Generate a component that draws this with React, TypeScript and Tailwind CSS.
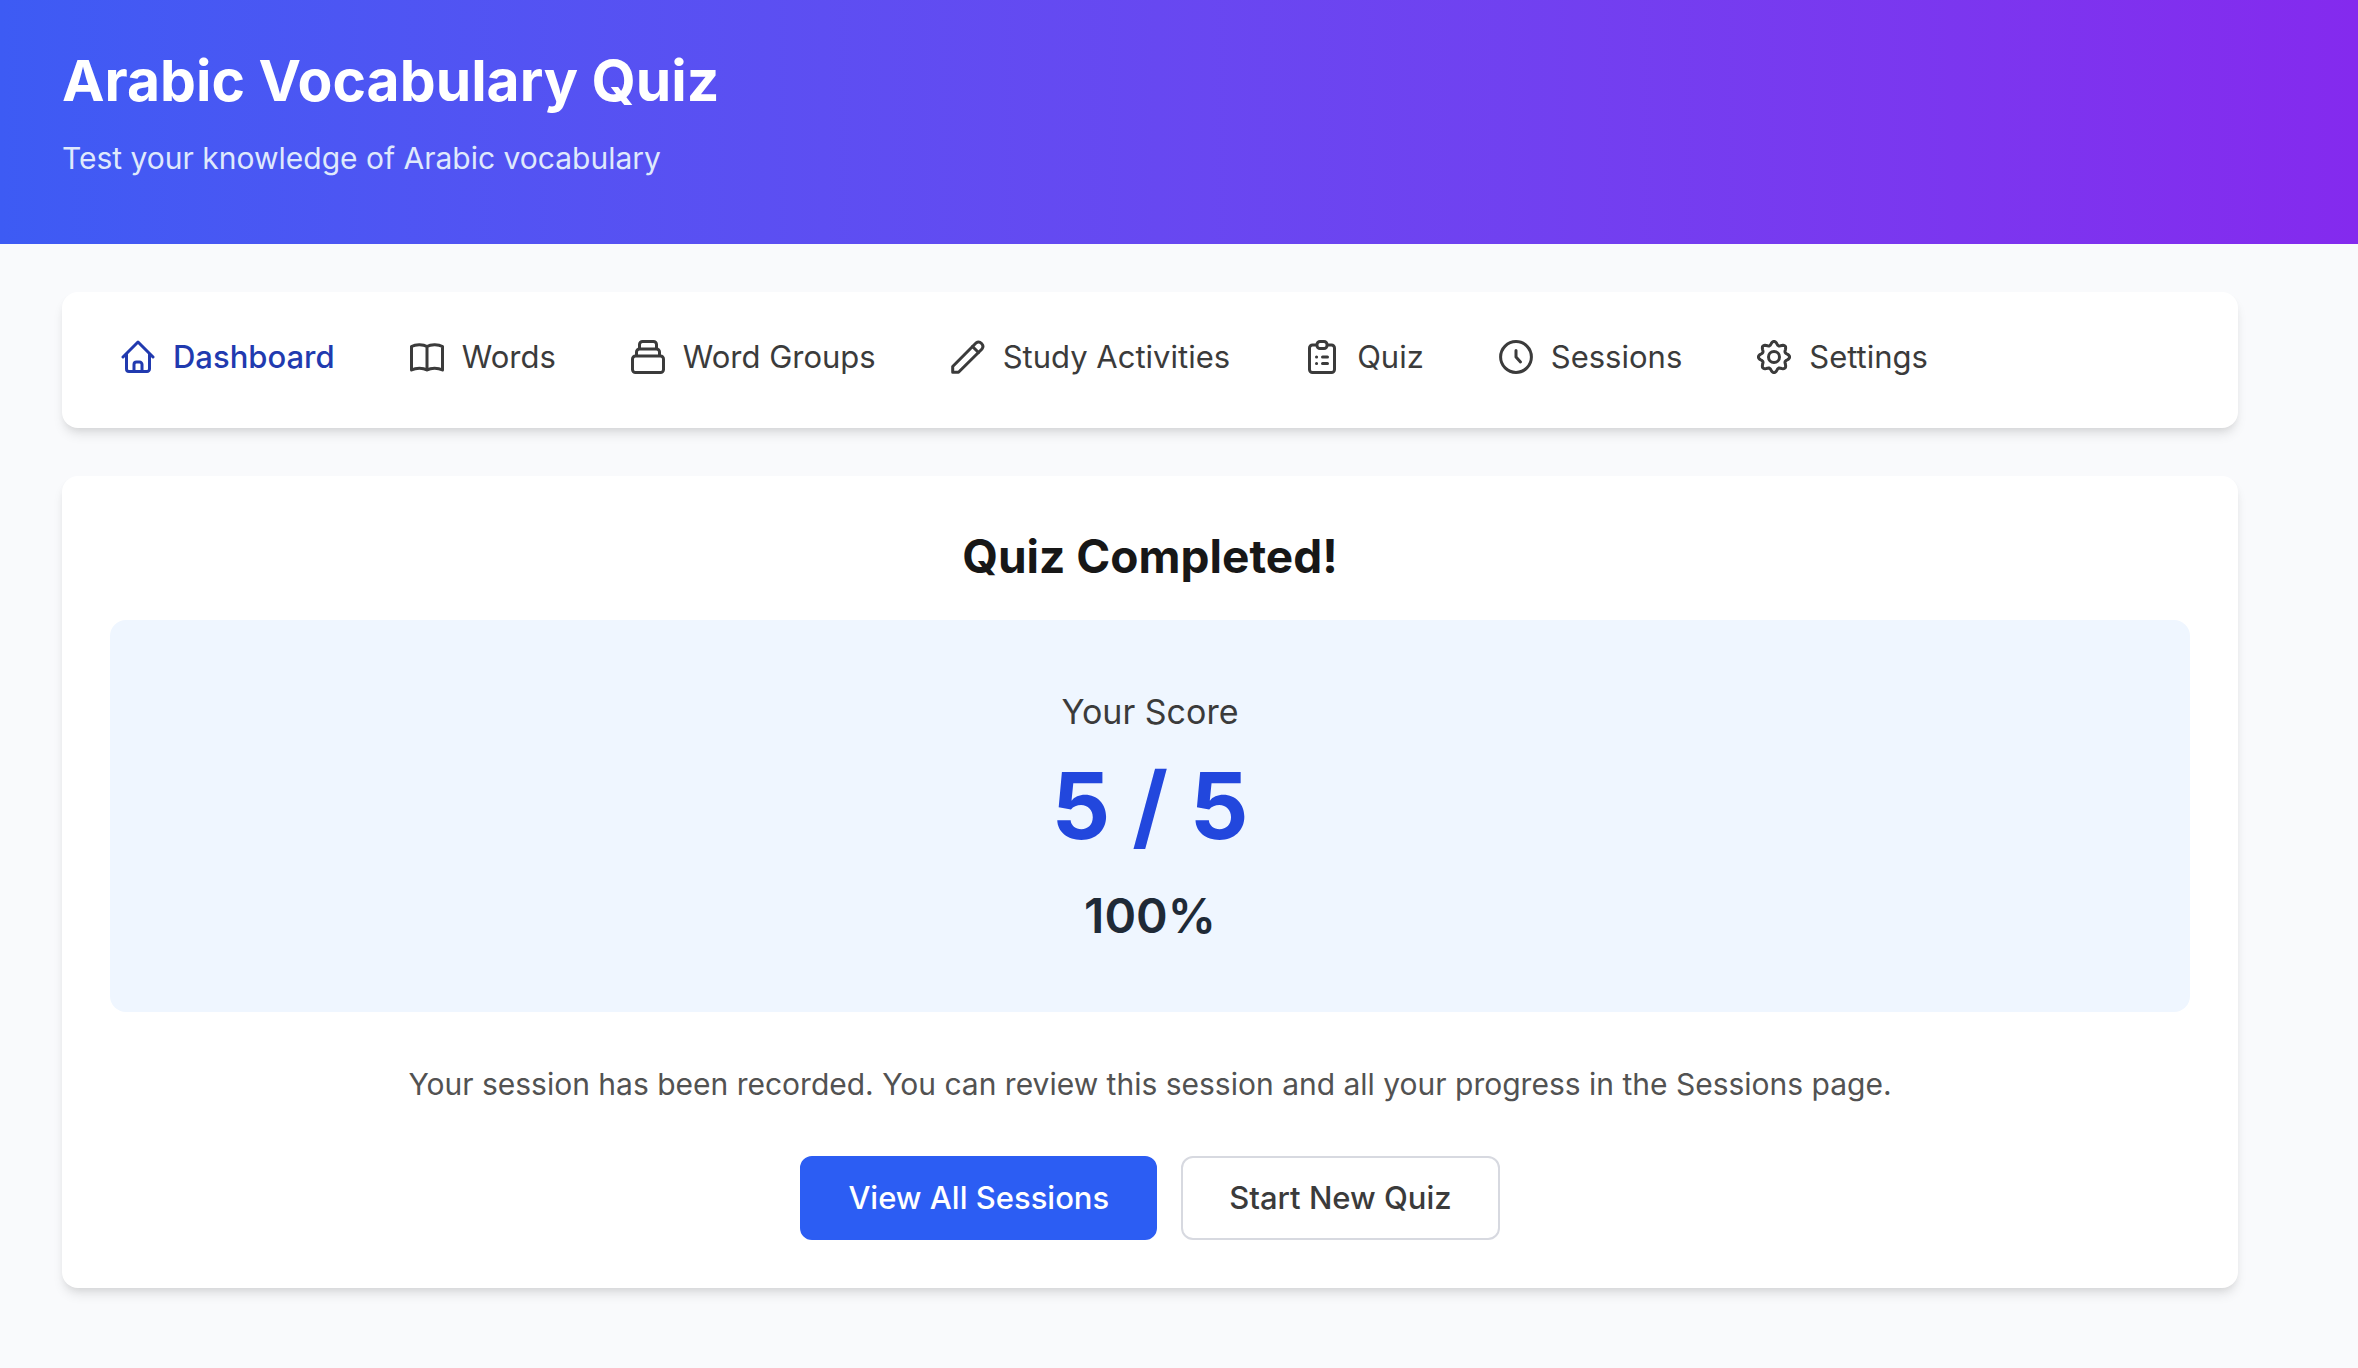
import type { ReactNode } from "react";

const gearOutline =
  Array.from({ length: 96 }, (_, i) => {
    const angle = (i / 96) * Math.PI * 2;
    const radius = 13.8 + 1.8 * Math.cos(angle * 8);
    const x = 17 + radius * Math.sin(angle);
    const y = 17 - radius * Math.cos(angle);
    return `${i === 0 ? "M" : "L"}${x.toFixed(2)} ${y.toFixed(2)}`;
  }).join("") + "Z";

function Icon({ children }: { children: ReactNode }) {
  return (
    <svg
      viewBox="0 0 34 34"
      className="size-[34px] shrink-0"
      fill="none"
      stroke="currentColor"
      strokeWidth="3"
      strokeLinecap="round"
      strokeLinejoin="round"
      aria-hidden="true"
    >
      {children}
    </svg>
  );
}

const navItems: { label: string; active?: boolean; icon: ReactNode }[] = [
  {
    label: "Dashboard",
    active: true,
    icon: (
      <>
        <path d="M2 17 17 2l15 15" />
        <path d="M5.5 14.5V29a2.5 2.5 0 0 0 2.5 2.5h18a2.5 2.5 0 0 0 2.5-2.5V14.5" />
        <path d="M13 31v-6.5a2.5 2.5 0 0 1 2.5-2.5h3a2.5 2.5 0 0 1 2.5 2.5V31" />
      </>
    ),
  },
  {
    label: "Words",
    icon: (
      <path d="M17 6.500C13.500 4.500 6 4 1.500 6.500v23.500c4.500-2.500 11.500-2.500 15.500 0 4-2.500 11-2.500 15.500 0V6.500C28 4 20.500 4.500 17 6.500V30" />
    ),
  },
  {
    label: "Word Groups",
    icon: (
      <>
        <rect x="1.5" y="16" width="31" height="16.5" rx="3" />
        <path d="M5.5 15.5V12a3 3 0 0 1 3-3h17a3 3 0 0 1 3 3v3.5" />
        <path d="M8.5 8.5v-4a3 3 0 0 1 3-3h11a3 3 0 0 1 3 3v4" />
      </>
    ),
  },
  {
    label: "Study Activities",
    icon: (
      <>
        <path d="M1.7 26.5 25 3a4.300 4.300 0 0 1 6 6L7.500 32.300H1.700z" />
        <path d="m21.5 6.500 6 6" />
      </>
    ),
  },
  {
    label: "Quiz",
    icon: (
      <>
        <path d="M11.500 5H7.500a3 3 0 0 0-3 3v21.500a3 3 0 0 0 3 3h19a3 3 0 0 0 3-3V8a3 3 0 0 0-3-3h-4" />
        <rect x="12" y="1.5" width="10" height="7" rx="3" />
        <path d="M11.500 17h.1M17.500 17h5M11.500 23.500h.1M17.500 23.500h5" />
      </>
    ),
  },
  {
    label: "Sessions",
    icon: (
      <>
        <circle cx="17" cy="17" r="15.4" />
        <path d="M17 10.500V17l4.500 5" />
      </>
    ),
  },
  {
    label: "Settings",
    icon: (
      <>
        <path d={gearOutline} />
        <circle cx="17" cy="17" r="5.5" />
      </>
    ),
  },
];

export default function App() {
  return (
    <div className="min-h-screen bg-[#f9fafc] font-['Inter',sans-serif] text-[31px] leading-[48px] text-[#3b3b3b]">
      <header className="bg-linear-to-r from-[#3d5bf4] to-[#842aee] pt-12 pr-16 pb-[62px] pl-[62px]">
        <h1 className="text-[57px] leading-[66px] font-bold text-white">Arabic Vocabulary Quiz</h1>
        <p className="mt-5 text-[30px] text-[#dfe9fc]">Test your knowledge of Arabic vocabulary</p>
      </header>

      <main className="flex max-w-[2302px] flex-col gap-12 py-12 pr-16 pl-[62px]">
        <nav className="rounded-2xl bg-white px-[59px] pt-[41px] pb-[47px] shadow-[0_8px_12px_-2px_rgba(0,0,0,0.1),0_4px_8px_-4px_rgba(0,0,0,0.1)]">
          <ul className="flex flex-wrap gap-x-[75px]">
            {navItems.map((item) => (
              <li key={item.label}>
                <a
                  href="#"
                  className={
                    item.active
                      ? "flex items-center gap-[18px] font-medium text-[#213aaf]"
                      : "flex items-center gap-[18px]"
                  }
                >
                  <Icon>{item.icon}</Icon>
                  {item.label}
                </a>
              </li>
            ))}
          </ul>
        </nav>

        <section className="rounded-2xl bg-white p-12 text-center shadow-[0_8px_12px_-2px_rgba(0,0,0,0.1),0_4px_8px_-4px_rgba(0,0,0,0.1)]">
          <h2 className="text-[46px] leading-[64px] font-bold text-[#171717]">Quiz Completed!</h2>
          <div className="mt-8 rounded-2xl bg-[#eff6ff] p-16">
            <p className="text-[34px] leading-[56px]">Your Score</p>
            <p className="mt-[18px] text-[92px] leading-[96px] font-bold text-[#2247dd]">5 / 5</p>
            <p className="mt-[30px] text-[48px] leading-[64px] font-semibold text-[#1f2a37]">
              100%
            </p>
          </div>
          <p className="mt-12 text-[30px] text-[#525252]">
            Your session has been recorded. You can review this session and all your progress in
            the Sessions page.
          </p>
          <div className="mt-12 flex justify-center gap-6 font-medium">
            <button
              type="button"
              className="rounded-xl border-2 border-[#2c5df3] bg-[#2c5df3] px-[46px] py-4 text-white"
            >
              View All Sessions
            </button>
            <button
              type="button"
              className="rounded-xl border-2 border-[#d7d9e0] bg-white px-[46px] py-4"
            >
              Start New Quiz
            </button>
          </div>
        </section>
      </main>
    </div>
  );
}
